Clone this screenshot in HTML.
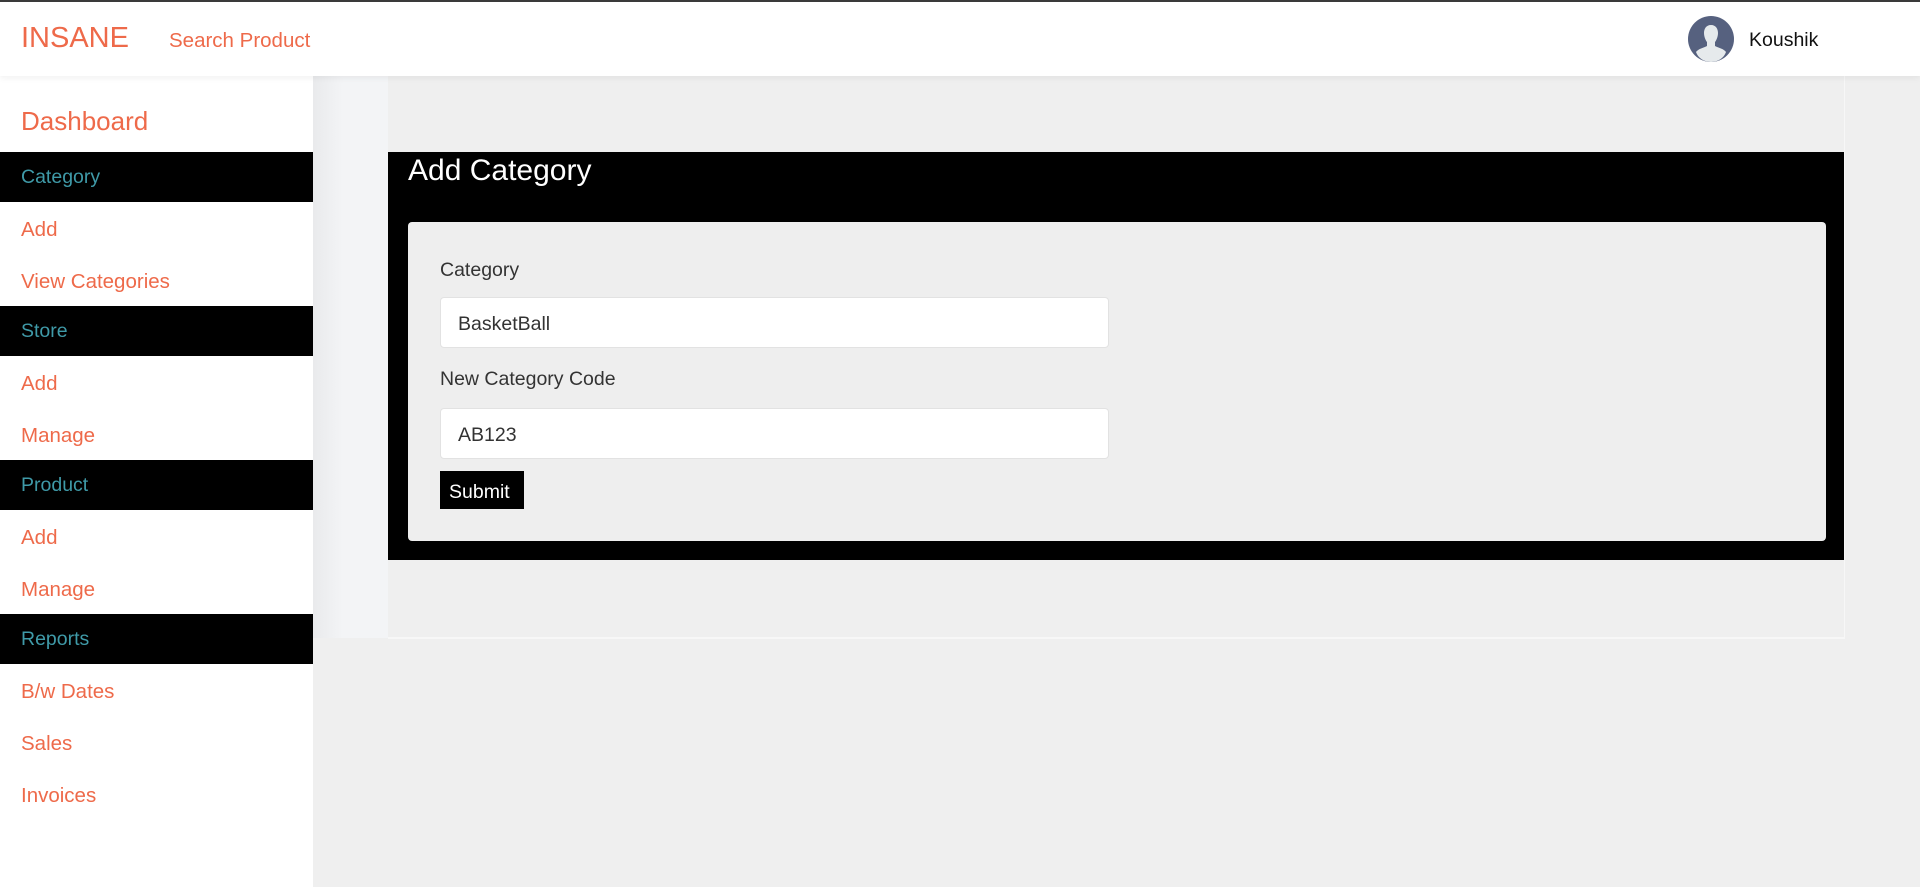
<!DOCTYPE html>
<html><head><meta charset="utf-8"><style>
*{margin:0;padding:0;box-sizing:border-box}
body{width:1920px;height:887px;overflow:hidden;background:#efefef;font-family:"Liberation Sans",Arial,sans-serif;position:relative}
.top{position:absolute;left:0;top:0;width:1920px;height:76px;background:#fff;border-top:2px solid #3a3a3a;box-shadow:0 2px 6px rgba(0,0,0,.06);z-index:3}
.brand{position:absolute;left:21px;top:20px;font-size:29px;color:#ee6a4a}
.search{position:absolute;left:169px;top:27px;font-size:20.5px;color:#ee6a4a}
.av{position:absolute;left:1688px;top:14px;width:46px;height:46px;border-radius:50%;background:#56617f;overflow:hidden}
.user{position:absolute;left:1749px;top:27px;font-size:19.5px;color:#111}
.side{position:absolute;left:0;top:76px;width:313px;height:811px;background:#fff;z-index:2}
.side .dash{height:76px;padding:30px 0 0 21px;font-size:26px;color:#ee6a4a}
.side .bar{height:50px;background:#000;color:#3f9aa8;font-size:19.5px;padding:14px 0 0 21px}
.side .lk{height:52px;color:#ee6a4a;font-size:20.5px;padding:16px 0 0 21px}
.strip{position:absolute;left:313px;top:76px;width:75px;height:562px;background:linear-gradient(90deg,#e9eaec,#f3f4f6 40%)}
.panel{position:absolute;left:388px;top:76px;width:1457px;height:563px;background:#efefef;border-right:1px solid #f7f7f7;border-bottom:2px solid #f7f7f7}
.box{position:absolute;left:388px;top:152px;width:1456px;height:408px;background:#000}
.box h2{position:absolute;left:20px;top:1px;font-weight:normal;font-size:30px;color:#fff;line-height:36px}
.card{position:absolute;left:20px;top:70px;width:1418px;height:319px;background:#eeeeee;border-radius:4px}
.lbl{position:absolute;left:32px;font-size:19.5px;color:#333}
.inp{position:absolute;left:32px;width:669px;height:51px;background:#fff;border:1px solid #e2e2e2;border-radius:4px;font-size:19.5px;color:#333;padding:15px 0 0 17px}
.btn{position:absolute;left:32px;top:249px;width:84px;height:38px;background:#000;color:#fff;font-size:19.5px;padding:10px 0 0 9px}
</style></head><body>
<div class="top">
<div class="brand">INSANE</div>
<div class="search">Search Product</div>
<div class="av"><svg width="46" height="46" viewBox="0 0 46 46"><path d="M23 9c-5 0-7 4-7 8 0 4 2 8 3 9v4c-4 2-9 3-11 6 2 6 8 10 15 10s13-4 15-10c-2-3-7-4-11-6v-4c1-1 3-5 3-9 0-4-2-8-7-8z" fill="#e6eaec"/></svg></div>
<div class="user">Koushik</div>
</div>
<div class="side">
<div class="dash">Dashboard</div>
<div class="bar">Category</div>
<div class="lk">Add</div>
<div class="lk">View Categories</div>
<div class="bar">Store</div>
<div class="lk">Add</div>
<div class="lk">Manage</div>
<div class="bar">Product</div>
<div class="lk">Add</div>
<div class="lk">Manage</div>
<div class="bar">Reports</div>
<div class="lk">B/w Dates</div>
<div class="lk">Sales</div>
<div class="lk">Invoices</div>
</div>
<div class="strip"></div>
<div class="panel"></div>
<div class="box">
<h2>Add Category</h2>
<div class="card">
<div class="lbl" style="top:37px">Category</div>
<div class="inp" style="top:75px">BasketBall</div>
<div class="lbl" style="top:146px">New Category Code</div>
<div class="inp" style="top:186px">AB123</div>
<div class="btn">Submit</div>
</div>
</div>
</body></html>
